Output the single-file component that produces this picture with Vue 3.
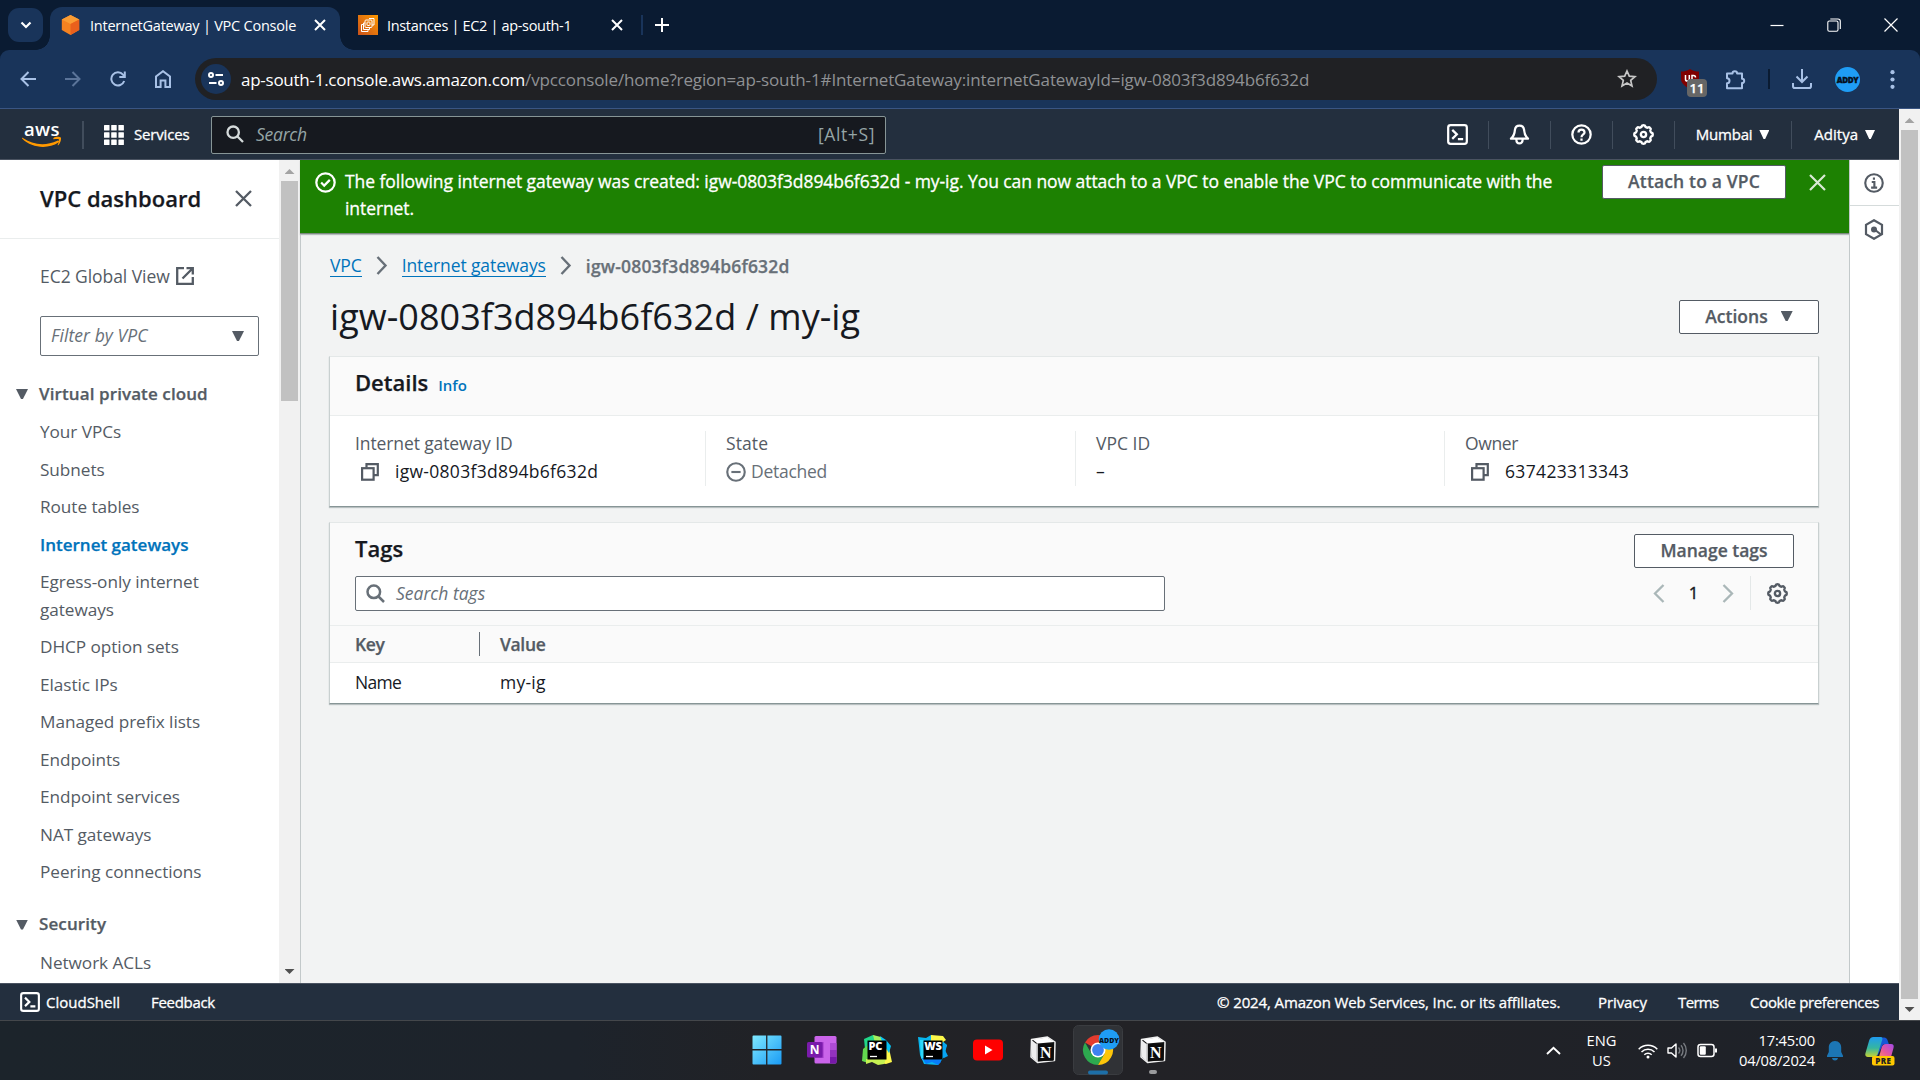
<script setup>
const vpcLinks = [
  'Your VPCs', 'Subnets', 'Route tables', 'Internet gateways', 'Egress-only internet gateways',
  'DHCP option sets', 'Elastic IPs', 'Managed prefix lists', 'Endpoints', 'Endpoint services',
  'NAT gateways', 'Peering connections'
]
const securityLinks = ['Network ACLs']
const current = 'Internet gateways'
const igw = 'igw-0803f3d894b6f632d'

// Outline of an eight-toothed cog on a 16-unit grid
const cog = 'M' + Array.from({ length: 96 }, (_, i) => {
  const a = (i / 96) * Math.PI * 2
  const r = 6.45 + 0.6 * Math.tanh(2.2 * Math.cos(8 * a))
  return (8 + r * Math.cos(a)).toFixed(2) + ' ' + (8 + r * Math.sin(a)).toFixed(2)
}).join('L') + 'Z'
</script>

<template>
  <div class="screen">
    <!-- Browser tab strip -->
    <div class="tabs">
      <div class="tab-search">
        <svg width="12" height="8" viewBox="0 0 12 8"><path d="M1.500 1.500 6 6l4.500-4.500" fill="none" stroke="#fff" stroke-width="2.200" /></svg>
      </div>
      <div class="tab active">
        <svg class="fav" width="19" height="20" viewBox="0 0 19 20">
          <path d="M9.500 0 18.200 4.600V15L9.500 20 .8 15V4.600Z" fill="#f58220" />
          <path d="M9.500 0 18.200 4.600 9.500 9 .8 4.600Z" fill="#fa9c33" />
          <path d="M9.500 9 18.200 4.600V15L9.500 20Z" fill="#e9601c" />
        </svg>
        <span class="tab-title">InternetGateway | VPC Console</span>
        <svg class="x" width="12" height="12" viewBox="0 0 12 12"><path d="M1 1l10 10M11 1 1 11" stroke="#fff" stroke-width="2" /></svg>
      </div>
      <div class="tab second">
        <svg class="fav" width="20" height="20" viewBox="0 0 20 20">
          <defs><linearGradient id="ec2" x1="0" y1="1" x2="1" y2="0"><stop offset="0" stop-color="#c8511b" /><stop offset="1" stop-color="#f90" /></linearGradient></defs>
          <rect width="20" height="20" fill="url(#ec2)" />
          <g fill="none" stroke="#fff" stroke-width="1"><rect x="7" y="5" width="7" height="7.500" rx="1" /><rect x="9" y="7" width="3" height="3.500" rx=".8" /><path d="M11 3.500h5V10h-2M5.500 9.500H3.500v7H10V14.500M7 8H5.500v6.500h6V12.500" /></g>
        </svg>
        <span class="tab-title">Instances | EC2 | ap-south-1</span>
        <svg class="x" width="12" height="12" viewBox="0 0 12 12"><path d="M1 1l10 10M11 1 1 11" stroke="#fff" stroke-width="2" /></svg>
      </div>
      <i class="tab-sep"></i>
      <svg class="plus" width="14" height="14" viewBox="0 0 14 14"><path d="M7 0v14M0 7h14" stroke="#fff" stroke-width="2" /></svg>
      <div class="win">
        <svg width="14" height="14" viewBox="0 0 14 14"><path d="M.5 7.500h13" stroke="#fff" stroke-width="1.200" /></svg>
        <svg width="14" height="14" viewBox="0 0 14 14" fill="none" stroke="#fff" stroke-width="1.100"><rect x=".8" y="3" width="10.200" height="10.200" rx="1.500" /><path d="M3.300 1H11a2.300 2.300 0 0 1 2.300 2.300V11" /></svg>
        <svg width="14" height="14" viewBox="0 0 14 14"><path d="M.5.5l13 13M13.500.5l-13 13" stroke="#fff" stroke-width="1.200" /></svg>
      </div>
    </div>

    <!-- Address bar -->
    <div class="toolbar-wrap">
      <div class="toolbar">
        <div class="nav-icons">
          <svg width="16" height="16" viewBox="0 0 16 16"><path d="M16 8H2M8.500 1 1.500 8l7 7" fill="none" stroke="#a8c1e6" stroke-width="2" /></svg>
          <svg width="16" height="16" viewBox="0 0 16 16"><path d="M0 8h14M7.500 1l7 7-7 7" fill="none" stroke="#5b7499" stroke-width="2" /></svg>
          <svg width="16" height="16" viewBox="0 0 16 16"><path d="M14.200 10A6.600 6.600 0 1 1 13 3.600L14.600 5.500" fill="none" stroke="#a8c1e6" stroke-width="2" /><path d="M15.800.5V7H9.300V5h4.500V.5Z" fill="#a8c1e6" /></svg>
          <svg width="16" height="18" viewBox="0 0 16 18"><path d="M1 17V6.500L8 1.200l7 5.300V17h-4.600v-6.500H5.600V17Z" fill="none" stroke="#a8c1e6" stroke-width="2" /></svg>
        </div>
        <div class="omnibox">
          <div class="site">
            <svg width="16" height="14" viewBox="0 0 16 14" fill="none" stroke="#fff" stroke-width="2"><circle cx="3" cy="3" r="2" /><path d="M7.500 3H15M1 11h7.500" /><circle cx="13" cy="11" r="2" /></svg>
          </div>
          <span class="host">ap-south-1.console.aws.amazon.com</span><span class="path">/vpcconsole/home?region=ap-south-1#InternetGateway:internetGatewayId=igw-0803f3d894b6f632d</span>
          <svg class="star" width="20" height="20" viewBox="0 0 20 20"><path d="M10 2l2.300 5.200 5.700.5-4.300 3.700 1.300 5.600-5-3-5 3 1.300-5.600L2 7.700l5.700-.5Z" fill="none" stroke="#c7c7c7" stroke-width="1.700" /></svg>
        </div>
        <div class="ublock">
          <svg width="20" height="20" viewBox="0 0 20 20"><path d="M10 0c3 2 6 2.500 9 2.500V10c0 4-4 7.500-9 10C5 17.500 1 14 1 10V2.500C4 2.500 7 2 10 0Z" fill="#800000" /><path d="M5.500 6v4.200a1.900 1.900 0 0 0 3.800 0V6M12 12V6.500h1.500a2 2 0 0 1 2 2" fill="none" stroke="#fff" stroke-width="1.500" /></svg>
          <b class="badge">11</b>
        </div>
        <svg class="puzzle" width="21" height="21" viewBox="0 0 21 21"><path d="M2 4.500h5.500a2.300 2.300 0 0 1 4.600 0H17v5.200a2.200 2.200 0 0 1 0 4.400V19.300H2v-5a2.500 2.500 0 0 0 0-5Z" fill="none" stroke="#a8c1e6" stroke-width="2" stroke-linejoin="round" /></svg>
        <i class="tool-sep"></i>
        <svg class="dl" width="20" height="20" viewBox="0 0 20 20"><path d="M10 0v13M4.500 7.500 10 13l5.500-5.500M1 14v3.200Q1 19 2.800 19h14.400q1.800 0 1.800-1.800V14" fill="none" stroke="#a8c1e6" stroke-width="2" /></svg>
        <div class="avatar">ADDY</div>
        <svg class="dots" width="5" height="19" viewBox="0 0 5 19" fill="#a8c1e6"><circle cx="2.500" cy="2.200" r="2.100" /><circle cx="2.500" cy="9.500" r="2.100" /><circle cx="2.500" cy="16.800" r="2.100" /></svg>
      </div>
    </div>

    <!-- Web page -->
    <div class="page">
      <div class="console">
        <header class="aws">
          <div class="logo">
            <span>aws</span>
            <svg width="40" height="11" viewBox="0 15 40 11">
              <path d="M.5 16.800C11 24.300 24 25 35.300 19.800c1.500-.7 2.500.7 1.100 1.700C26 28.500 9.500 27 .3 17.800c-.6-.7-.3-1.400.2-1Z" fill="#f90" />
              <path d="M31.500 17c2.500-1.700 6.500-1.200 7.300-.5.700.8-.2 5.700-2.500 7.700-.4.300-.8.100-.6-.4.700-1.500 1.700-4.600 1.200-5.300-.6-.7-3.500-.4-5-.2-.6 0-.8-.7-.4-1.300Z" fill="#f90" />
            </svg>
          </div>
          <i class="sep s-logo"></i>
          <svg class="grid-icon" width="20" height="20" viewBox="0 0 20 20" fill="#fff"><template v-for="r in 3"><rect v-for="c in 3" :key="r + '-' + c" :x="(c - 1) * 7.2" :y="(r - 1) * 7.2" width="5.500" height="5.500" rx=".5" /></template></svg>
          <span class="med services">Services</span>
          <div class="aws-search">
            <svg width="18" height="18" viewBox="0 0 18 18" fill="none" stroke="#d5dbdb" stroke-width="2.300"><circle cx="7.200" cy="7.200" r="5.700" /><path d="m11.500 11.500 5.500 5.500" /></svg>
            <em>Search</em><span class="alt">[Alt+S]</span>
          </div>
          <div class="aws-right">
            <svg width="21" height="21" viewBox="0 0 16 16" fill="none" stroke="#fff" stroke-width="1.700"><rect x=".9" y=".9" width="14.200" height="14.200" rx="1.800" /><path d="m4 4.500 3.500 3.400L4 11.300M8.300 11.500h4" /></svg>
            <i class="sep"></i>
            <svg width="21" height="21" viewBox="0 0 16 16" fill="none" stroke="#fff" stroke-width="1.700" stroke-linejoin="round"><path d="M8 1.200c-2 0-3.300 1.500-3.500 3.300-.2 3-1 5-3 6.700h13c-2-1.700-2.800-3.700-3-6.700C11.300 2.700 10 1.200 8 1.200ZM5.600 11.800c0 4 4.800 4 4.800 0" /></svg>
            <i class="sep"></i>
            <svg width="21" height="21" viewBox="0 0 16 16" fill="none" stroke="#fff" stroke-width="1.700"><circle cx="8" cy="8" r="7" /><path d="M5.700 6.500c0-3 4.600-3 4.600 0C10.300 8 8 8 8 10M8 11v1.700" /></svg>
            <i class="sep"></i>
            <svg width="21" height="21" viewBox="0 0 16 16" fill="none" stroke="#fff" stroke-width="1.800"><path :d="cog" /><circle cx="8" cy="8" r="2" /></svg>
            <i class="sep"></i>
            <span class="med region">Mumbai</span><i class="caret white"></i>
            <i class="sep wide"></i>
            <span class="med user">Aditya</span><i class="caret white"></i>
          </div>
        </header>

        <div class="body">
          <aside class="side">
            <div class="side-head">
              <h2>VPC dashboard</h2>
              <svg width="17" height="17" viewBox="0 0 17 17"><path d="m1 1 15 15M16 1 1 16" stroke="#545b64" stroke-width="2.300" /></svg>
            </div>
            <div class="side-body">
              <div class="global"><span>EC2 Global View</span>
                <svg width="18" height="18" viewBox="0 0 18 18" fill="none" stroke="#545b64" stroke-width="2.300"><path d="M8 1.200H1.200v15.600h15.600V10M10.500 1.200h6.300v6.300M16.500 1.500 6.500 11.500" /></svg>
              </div>
              <div class="filter"><em>Filter by VPC</em><i class="caret"></i></div>
              <div class="section"><i class="caret"></i><b>Virtual private cloud</b></div>
              <ul><li v-for="l in vpcLinks" :key="l" :class="{ on: l === current }">{{ l }}</li></ul>
              <div class="section second-section"><i class="caret"></i><b>Security</b></div>
              <ul><li v-for="l in securityLinks" :key="l">{{ l }}</li></ul>
            </div>
          </aside>
          <div class="scroll inner"><i class="up"></i><i class="thumb"></i><i class="down"></i></div>

          <main>
            <div class="flash">
              <svg width="21" height="21" viewBox="0 0 16 16" fill="none" stroke="#fff" stroke-width="1.700"><circle cx="8" cy="8" r="7" /><path d="m4.700 8 2.300 2.400L11.300 6" /></svg>
              <p class="med"><span>The following internet gateway was created: igw-0803f3d894b6f632d - my-ig. You can now attach to a VPC to enable the VPC to communicate with the</span> internet.</p>
              <button class="btn attach">Attach to a VPC</button>
              <svg class="fx" width="17" height="17" viewBox="0 0 17 17"><path d="m1 1 15 15M16 1 1 16" stroke="#d9ead5" stroke-width="2.200" /></svg>
            </div>
            <div class="content">
              <nav class="crumbs">
                <a>VPC</a>
                <svg width="12" height="19" viewBox="0 0 12 19"><path d="m1.500 1 8 8.500-8 8.500" fill="none" stroke="#687078" stroke-width="2.400" /></svg>
                <a>Internet gateways</a>
                <svg width="12" height="19" viewBox="0 0 12 19"><path d="m1.500 1 8 8.500-8 8.500" fill="none" stroke="#687078" stroke-width="2.400" /></svg>
                <b>{{ igw }}</b>
              </nav>
              <div class="title-row">
                <h1>{{ igw }} / my-ig</h1>
                <button class="btn actions">Actions<i class="caret"></i></button>
              </div>

              <section class="card details">
                <div class="card-head"><h3>Details</h3><b class="info">Info</b></div>
                <div class="cols">
                  <div class="col">
                    <label class="c1">Internet gateway ID</label>
                    <div class="val copy"><svg width="18" height="18" viewBox="0 0 18 18" fill="none" stroke="#545b64" stroke-width="2.200"><rect x="1.100" y="5.200" width="11.500" height="11.500" /><path d="M5.500 4.500V1.200h11.300v11H13" /></svg><span class="id">{{ igw }}</span></div>
                  </div>
                  <div class="col">
                    <label class="c2">State</label>
                    <div class="val muted"><svg width="20" height="20" viewBox="0 0 16 16" fill="none" stroke="#687078" stroke-width="1.700"><circle cx="8" cy="8" r="7" /><path d="M4.300 8h7.400" /></svg><span>Detached</span></div>
                  </div>
                  <div class="col">
                    <label class="c3">VPC ID</label>
                    <div class="val">–</div>
                  </div>
                  <div class="col">
                    <label class="c4">Owner</label>
                    <div class="val copy"><svg width="18" height="18" viewBox="0 0 18 18" fill="none" stroke="#545b64" stroke-width="2.200"><rect x="1.100" y="5.200" width="11.500" height="11.500" /><path d="M5.500 4.500V1.200h11.300v11H13" /></svg><span class="acct">637423313343</span></div>
                  </div>
                </div>
              </section>

              <section class="card tags">
                <div class="tags-top">
                  <div class="tags-left">
                    <h3>Tags</h3>
                    <div class="tag-search">
                      <svg width="19" height="19" viewBox="0 0 19 19" fill="none" stroke="#687078" stroke-width="2.500"><circle cx="7.800" cy="7.800" r="6.300" /><path d="m12.500 12.500 5.500 5.500" /></svg>
                      <em>Search tags</em>
                    </div>
                  </div>
                  <div class="tags-right">
                    <button class="btn manage">Manage tags</button>
                    <div class="pager">
                      <svg width="12" height="19" viewBox="0 0 12 19"><path d="m10.500 1-8.500 8.500 8.500 8.500" fill="none" stroke="#aab7b8" stroke-width="2.300" /></svg>
                      <span>1</span>
                      <svg width="12" height="19" viewBox="0 0 12 19"><path d="m1.500 1 8.500 8.500-8.500 8.500" fill="none" stroke="#aab7b8" stroke-width="2.300" /></svg>
                      <i></i>
                      <svg width="21" height="21" viewBox="0 0 16 16" fill="none" stroke="#545b64" stroke-width="1.800"><path :d="cog" /><circle cx="8" cy="8" r="2" /></svg>
                    </div>
                  </div>
                </div>
                <div class="row th"><b>Key</b><b>Value</b></div>
                <div class="row"><span class="name">Name</span><span class="my">my-ig</span></div>
              </section>
            </div>
          </main>

          <div class="rail">
            <div><svg width="20" height="20" viewBox="0 0 16 16" fill="none" stroke="#545b64" stroke-width="1.700"><circle cx="8" cy="8" r="7" /><path d="M6.200 7.200H8.300v4.300M5.700 11.700h4.800M7.100 4.500h1.700" /></svg></div>
            <div><svg width="20" height="21" viewBox="0 0 20 21" fill="none" stroke="#545b64" stroke-width="2.200"><path d="M10 1.200 18 5.800v9.400l-8 4.600-8-4.600V5.800Z" /><circle cx="10" cy="10.500" r="3" fill="#545b64" stroke="none" /><path d="m10.500 10.500 6.500 5" /></svg></div>
          </div>
        </div>

        <footer class="foot med">
          <svg width="20" height="20" viewBox="0 0 16 16" fill="none" stroke="#fff" stroke-width="1.700"><rect x=".9" y=".9" width="14.200" height="14.200" rx="1.800" /><path d="m4 4.500 3.500 3.400L4 11.300M8.300 11.500h4" /></svg>
          <span class="f1">CloudShell</span><span class="f2">Feedback</span>
          <span class="f3">© 2024, Amazon Web Services, Inc. or its affiliates.</span>
          <span class="f4">Privacy</span><span class="f5">Terms</span><span class="f6">Cookie preferences</span>
        </footer>
      </div>
      <div class="scroll outer"><i class="up"></i><i class="thumb"></i><i class="down"></i></div>
    </div>

    <!-- Windows taskbar -->
    <div class="taskbar">
      <div class="apps">
        <svg width="30" height="30" viewBox="0 0 30 30">
          <defs><linearGradient id="win" x1="0" y1="0" x2="1" y2="1"><stop offset="0" stop-color="#7fe9ff" /><stop offset="1" stop-color="#1a9bf5" /></linearGradient></defs>
          <path d="M1.500.5h12.600v13.600H.5V1.500a1 1 0 0 1 1-1ZM15.400.5h13.100a1 1 0 0 1 1 1v12.600H15.400ZM.5 15.400h13.600v14.100H1.500a1 1 0 0 1-1-1ZM15.400 15.400h14.100v13.100a1 1 0 0 1-1 1H15.400Z" fill="url(#win)" />
        </svg>
        <svg width="30" height="30" viewBox="0 0 30 30">
          <rect x="7.500" y="1" width="22" height="27.500" rx="1.500" fill="#ca64ea" /><path d="M23 8h6.500v7H23Z" fill="#ae4bd5" /><path d="M23 15h6.500v7H23Z" fill="#9332bf" /><path d="M23 22h6.500v5a1.500 1.500 0 0 1-1.500 1.500h-5Z" fill="#7719aa" /><path d="M16.500 7h-9v16h9Z" fill="#a038c8" />
          <rect x="0" y="7" width="15.500" height="15.500" rx="1.500" fill="#7a1bab" /><text x="7.700" y="19.300" class="ico-n">N</text>
        </svg>
        <svg width="30" height="30" viewBox="0 0 30 30">
          <path d="M2 4 11 0l4 2-1 6-8 18-4-1-1-6 2-5Z" fill="#21d789" /><path d="M11 0l8 2 3 4-9 2Z" fill="#a5ef5d" /><path d="M1 14l5-4v18l-6-2Z" fill="#62d84e" /><path d="M23 9l3 0 4 18-6 2-6-1Z" fill="#fcf84a" /><path d="M4 24h20l-2 5-6 1-6-3-6 2Z" fill="#c6f152" /><path d="M18 1l6 4 5 6-2 7-6-9Z" fill="#07c3f2" />
          <rect x="5.500" y="5.500" width="19" height="19" /><text x="6.600" y="15.300" class="ico-j">PC</text><path d="M8 21.500h7" stroke="#fff" stroke-width="1.300" />
        </svg>
        <svg width="30" height="30" viewBox="0 0 30 30">
          <path d="M0 2l8 1 5-3 8 3 8 7-3 12-6 8-14-1-4-9Z" fill="#08b5ee" /><path d="M13 0l12 1 3 4-6 4-9-3Z" fill="#fcf84a" /><path d="M2 5l4 0v21l-3-3Z" fill="#2bd8fb" /><path d="M4 23l18-1 1 5-3 3-6-3-6 2Z" fill="#087cfa" /><path d="M23 8l6 2-2 5 3 6-4 2-3-2Z" fill="#07a5f2" />
          <rect x="5.500" y="5.500" width="19" height="19" /><text x="6.300" y="15.300" class="ico-j">WS</text><path d="M8 21.500h7" stroke="#fff" stroke-width="1.300" />
        </svg>
        <svg width="30" height="30" viewBox="0 0 30 30"><rect y="4.500" width="30" height="21" rx="4" fill="#f00" /><path d="m12 10.500 7.500 4.500L12 19.500Z" fill="#fff" /></svg>
        <svg width="30" height="30" viewBox="0 0 30 30"><path d="m3.500 4.500 16-2.500 7.500 5-.5 18.500-17 2L3 22Z" fill="#111" stroke="#eee" stroke-width="1.500" stroke-linejoin="round" /><path d="m4.500 4.500 5 4 17-1.500-7-4.500Z" fill="#fff" /><path d="M9 8.500v18.500" stroke="#eee" stroke-width="1.500" /><path d="m3.500 5 5 4v17.500l-5-5Z" fill="#eee" /><rect x="10" y="9.300" width="15.500" height="16.500" fill="#0c0c0c" /><text x="17.800" y="23" class="ico-s">N</text></svg>
        <div class="chrome">
          <svg width="50" height="50" viewBox="0 0 50 50">
            <rect x=".5" y=".5" width="49" height="49" rx="5" fill="#303236" stroke="#3a3c40" />
            <g transform="translate(25 25)">
              <path d="M0 0-13-7.500A15 15 0 0 1 13-7.500Z" fill="#e33b2e" /><path d="M-13-7.500A15 15 0 0 0 0 15L6.500 3.700-6.500 3.700Z" fill="#2da94f" /><path d="M13-7.500A15 15 0 0 1 0 15L6.500 3.700 0-7.500Z" fill="#fdc60a" />
              <circle r="7.500" fill="#fff" /><circle r="5.900" fill="#3e82f1" />
            </g>
            <circle cx="36" cy="14.500" r="10.300" fill="#1f9df5" /><text x="36" y="17.600" class="ico-addy">ADDY</text>
            <rect x="15" y="45.500" width="20" height="4" rx="2" fill="#1d6fa8" />
          </svg>
        </div>
        <div class="running">
          <svg width="30" height="30" viewBox="0 0 30 30"><path d="m3.500 4.500 16-2.500 7.500 5-.5 18.500-17 2L3 22Z" fill="#111" stroke="#eee" stroke-width="1.500" stroke-linejoin="round" /><path d="m4.500 4.500 5 4 17-1.500-7-4.500Z" fill="#fff" /><path d="M9 8.500v18.500" stroke="#eee" stroke-width="1.500" /><path d="m3.500 5 5 4v17.500l-5-5Z" fill="#eee" /><rect x="10" y="9.300" width="15.500" height="16.500" fill="#0c0c0c" /><text x="17.800" y="23" class="ico-s">N</text></svg>
          <i></i>
        </div>
      </div>
      <div class="tray">
        <svg width="15" height="9" viewBox="0 0 15 9"><path d="m1 8 6.500-6.300L14 8" fill="none" stroke="#fff" stroke-width="1.900" /></svg>
        <div class="lang"><span>ENG</span><span>US</span></div>
        <svg class="wifi" width="20" height="16" viewBox="0 0 20 16" fill="none" stroke="#fff" stroke-width="1.500"><path d="M.7 6.200a13.200 13.200 0 0 1 18.600 0M3.500 9a9.200 9.200 0 0 1 13 0M6.300 11.800a5.300 5.300 0 0 1 7.400 0" /><circle cx="10" cy="14" r="1.500" fill="#fff" stroke="none" /></svg>
        <svg class="vol" width="21" height="17" viewBox="0 0 21 17" fill="none" stroke-width="1.400"><path d="M1 6v5h3.500L9 15V2L4.500 6Z" stroke="#fff" stroke-linejoin="round" /><path d="M11.500 5.500a4.500 4.500 0 0 1 0 6M14 3.200a8 8 0 0 1 0 10.600M16.500 1a11.500 11.500 0 0 1 0 15" stroke="#777b80" /></svg>
        <svg class="bat" width="21" height="15" viewBox="0 0 21 15" fill="none" stroke="#fff" stroke-width="1.500"><rect x="1" y="1.500" width="16" height="12" rx="2.500" /><rect x="2.800" y="3.300" width="6" height="8.400" rx="1" fill="#fff" stroke="none" /><path d="M19 5.500v4" stroke-width="2" /></svg>
        <div class="clock"><span>17:45:00</span><span class="date">04/08/2024</span></div>
        <svg class="bell" width="16" height="20" viewBox="0 0 16 20" fill="#1c76b5"><path d="M8 0C4 0 1.800 3 1.800 6.500V11L0 14.800c-.3.700 0 1.200.7 1.200h14.600c.7 0 1-.5.7-1.200L14.200 11V6.500C14.200 3 12 0 8 0ZM5 17h6c-.3 1.700-1.500 2.500-3 2.500S5.300 18.700 5 17Z" /></svg>
        <svg class="copilot" width="30" height="30" viewBox="0 0 30 30">
          <defs>
            <linearGradient id="cpa" x1="0" y1="0" x2="0" y2="1"><stop offset="0" stop-color="#1f9bf0" /><stop offset=".55" stop-color="#35b6a0" /><stop offset="1" stop-color="#c8d432" /></linearGradient>
            <linearGradient id="cpb" x1="1" y1="0" x2="0" y2="1"><stop offset="0" stop-color="#a24bea" /><stop offset=".6" stop-color="#e8579b" /><stop offset="1" stop-color="#f8876b" /></linearGradient>
          </defs>
          <path d="M13 1.500h6q3 0 4 4l1 3h-6l-6 12-1-10Z" fill="#1757d6" />
          <path d="M8.500 1H16q2 0 1.200 3L13 17q-1 4-4.500 4H3q-3.500 0-2.500-4L4 5q1-4 4.500-4Z" fill="url(#cpa)" />
          <path d="M21 8h5q3.500 0 2.500 4L26 21H14l2.500-9q1-4 4.500-4Z" fill="url(#cpb)" />
          <rect x="7" y="20" width="22.500" height="9.500" rx="2" fill="#ffc800" /><text x="18.300" y="27.700" class="ico-pre">PRE</text>
        </svg>
      </div>
    </div>
  </div>
</template>

<style>
body { margin: 0; overflow: hidden; }
</style>

<style scoped>
* { box-sizing: border-box; }
.screen { width: 1920px; height: 1080px; display: flex; flex-direction: column; font-family: "Open Sans", "Noto Sans", sans-serif; font-size: 17.5px; color: #16191f; overflow: hidden; white-space: nowrap; }
svg { display: block; flex: none; }
h1, h2, h3, p, ul { margin: 0; padding: 0; }
b, h2, h3 { font-weight: 600; -webkit-text-stroke: .25px currentColor; }
i { flex: none; }
.med { -webkit-text-stroke: .3px currentColor; }
.caret { display: block; width: 12px; height: 10px; background: #545b64; clip-path: polygon(0 0, 100% 0, 58% 100%, 42% 100%); }
.caret.white { width: 10px; height: 9px; background: #fff; }

/* tab strip */
.tabs { height: 50px; flex: none; display: flex; align-items: center; background: #0a1b32; padding-left: 8px; }
.tab-search { width: 35px; height: 34px; border-radius: 11px; background: #19345a; display: flex; align-items: center; justify-content: center; }
.tab { display: flex; align-items: center; color: #fff; }
.tab-title { font-size: 14.5px; letter-spacing: -.23px; line-height: 20px; padding-top: 2px; }
.tab.active { align-self: flex-end; width: 290px; height: 43px; margin-left: 7px; padding: 0 14px 7px 11px; background: #19345a; border-radius: 12px 12px 0 0; position: relative; }
.tab.active::before, .tab.active::after { content: ""; position: absolute; bottom: 0; width: 14px; height: 14px; }
.tab.active::before { left: -14px; background: radial-gradient(circle at 0 0, transparent 13.5px, #19345a 14px); }
.tab.active::after { right: -14px; background: radial-gradient(circle at 100% 0, transparent 13.5px, #19345a 14px); }
.tab .fav { margin-right: 10px; }
.tab .x { margin-left: auto; }
.tab.second { width: 283px; margin-left: 18px; padding-right: 18px; }
.tab.second .fav { margin-right: 9px; }
.tab.second .tab-title { letter-spacing: -.33px; }
.tab-sep { width: 2px; height: 20px; background: #19345a; }
.plus { margin-left: 12px; }
.win { display: flex; gap: 43px; margin-left: auto; padding-right: 22px; }

/* toolbar */
.toolbar-wrap { height: 59px; flex: none; background: #0a1b32; }
.toolbar { height: 59px; background: #19345a; border-radius: 9px 9px 0 0; border-bottom: 1px solid #3a5583; display: flex; align-items: center; }
.nav-icons { display: flex; align-items: center; gap: 29px; margin-left: 20px; }
.omnibox { width: 1462px; height: 42px; margin-left: 24px; border-radius: 21px; background: #202124; display: flex; align-items: center; padding: 0 20px 0 6px; font-size: 17px; }
.site { width: 30px; height: 30px; border-radius: 50%; background: #19345a; display: flex; align-items: center; justify-content: center; margin-right: 10px; }
.host { color: #fff; letter-spacing: -.26px; }
.path { color: #8f9194; letter-spacing: -.13px; }
.star { margin-left: auto; }
.ublock { position: relative; margin-left: 23px; }
.badge { position: absolute; left: 7px; top: 10px; width: 20px; height: 18px; border-radius: 4px; background: #666; color: #fff; font-size: 13px; line-height: 18px; text-align: center; }
.puzzle { margin-left: 25px; }
.tool-sep { width: 2px; height: 20px; margin-left: 22px; background: #0a1b32; }
.dl { margin-left: 22px; }
.avatar { width: 25px; height: 25px; margin-left: 23px; border-radius: 50%; background: #1f9df5; color: #06101c; font: 800 8px/25px "Open Sans", sans-serif; text-align: center; letter-spacing: -.4px; -webkit-text-stroke: .4px #06101c; }
.dots { margin-left: 30px; }

/* page */
.page { flex: 1; min-height: 0; display: flex; }
.console { width: 1899px; display: flex; flex-direction: column; }
.aws { height: 51px; flex: none; background: #232f3e; border-bottom: 1px solid #4a5361; display: flex; align-items: center; color: #fff; font-size: 15px; padding-left: 22px; padding-top: 1px; }
.logo { width: 40px; height: 32px; display: flex; flex-direction: column; justify-content: flex-end; align-items: center; padding-bottom: 4px; }
.logo span { font: 600 18.5px/24px "Open Sans", sans-serif; letter-spacing: .4px; margin-bottom: -5px; }
.sep { width: 1px; height: 28px; background: #414d5c; }
.s-logo { width: 2px; margin-left: 20px; }
.grid-icon { margin-left: 20px; }
.services, .region, .user { padding-bottom: 2px; }
.services { margin-left: 10px; letter-spacing: -.17px; width: 77px; }
.aws-search { width: 675px; height: 38px; border: 1px solid #879596; border-radius: 2px; background: #16191f; display: flex; align-items: center; padding: 0 10px 2px 14px; color: #95a5a6; font-size: 17.5px; }
.aws-search svg { margin-top: 1px; }
.aws-search em { margin-left: 12px; letter-spacing: -.25px; }
.alt { margin-left: auto; letter-spacing: .6px; }
.aws-right { display: flex; align-items: center; margin-left: auto; padding-right: 24px; gap: 20px; }
.region { margin-left: 1px; letter-spacing: -.22px; }
.aws-right .caret { margin-left: -13px; }
.sep.wide { margin-left: 2px; margin-right: 2px; }

.body { flex: 1; min-height: 0; display: flex; background: #fff; }
.side { width: 279px; flex: none; overflow: hidden; color: #545b64; }
.side-head { height: 79px; border-bottom: 1px solid #eaeded; display: flex; align-items: center; justify-content: space-between; padding: 0 27px 2px 40px; }
.side-head h2 { font-size: 22px; color: #16191f; }
.side-body { padding: 23px 20px 0 40px; }
.global { display: flex; align-items: center; gap: 6px; height: 28px; letter-spacing: -.06px; }
.filter { width: 219px; height: 40px; margin-top: 26px; border: 1px solid #687078; border-radius: 2px; display: flex; align-items: center; justify-content: space-between; padding: 0 14px 2px 10px; color: #687078; letter-spacing: .07px; }
.filter .caret { position: relative; top: 1px; }
.section { display: flex; align-items: center; margin: 24px 0 0 -24px; height: 28px; gap: 11px; font-size: 17px; letter-spacing: .1px; }
.section b { padding-bottom: 2px; }
.second-section { margin-top: 25px; }
.side ul { list-style: none; }
.side li { line-height: 27.5px; margin-top: 10px; font-size: 17.2px; letter-spacing: -.05px; white-space: normal; width: 190px; }
.side ul li.on { color: #0073bb; font-weight: 600; font-size: 17px; letter-spacing: 0; -webkit-text-stroke: .25px; }

.scroll { display: flex; flex-direction: column; align-items: center; background: #f1f1f1; flex: none; }
.scroll i { display: block; }
.scroll .up { width: 10px; height: 5px; background: #a3a3a3; clip-path: polygon(50% 0, 100% 100%, 0 100%); }
.scroll .down { width: 10px; height: 5px; background: #505050; clip-path: polygon(0 0, 100% 0, 50% 100%); }
.scroll .thumb { width: 17px; background: #c1c1c1; }
.inner { width: 21px; }
.inner .up { margin-top: 9px; }
.inner .thumb { height: 220px; margin-top: 7px; }
.inner .down { margin-top: auto; margin-bottom: 9px; }
.outer { width: 21px; }
.outer .up { margin-top: 9px; }
.outer .thumb { height: 869px; margin-top: 7px; }
.outer .down { margin-top: auto; margin-bottom: 8px; }

main { width: 1549px; flex: none; background: #f2f3f3; border-left: 1px solid #c3c9ca; display: flex; flex-direction: column; }
.flash { height: 74px; flex: none; background: #1d8102; color: #fff; display: flex; align-items: flex-start; padding: 5px 23px 0 15px; margin-left: -1px; border-bottom: 1px solid #7d8a80; box-shadow: 0 1px 1px #b5bcbd; }
.flash svg { margin-top: 7px; }
.flash p { width: 1258px; margin-left: 9px; margin-top: 3px; line-height: 27px; letter-spacing: -.08px; font-size: 17.5px; white-space: normal; }
.flash p span { white-space: nowrap; display: block; letter-spacing: -.061px; }
.flash .fx { margin-left: 23px; margin-top: 9px; }
.btn { display: flex; align-items: center; justify-content: center; background: #fff; color: #545b64; border: 1px solid #545b64; border-radius: 2px; font: 600 17.5px "Open Sans", sans-serif; -webkit-text-stroke: .25px; padding: 0 0 2px; }
.attach { width: 184px; height: 34px; letter-spacing: .15px; flex: none; }
.content { padding: 18px 30px 0 28px; }
.crumbs { display: flex; align-items: center; height: 27px; margin-left: 1px; }
.crumbs a { color: #0073bb; border-bottom: 1.5px solid #0073bb; line-height: 22px; letter-spacing: -.1px; }
.crumbs svg { margin: 0 14px; }
.crumbs b { color: #687078; letter-spacing: .18px; }
.title-row { display: flex; align-items: center; justify-content: space-between; margin-top: 16px; height: 44px; }
.title-row h1 { font-size: 36px; font-weight: 400; letter-spacing: .04px; padding: 0 0 2px 1px; }
.actions { width: 140px; height: 34px; gap: 13px; }
.card { width: 1490px; background: #fff; border: 1px solid #e4e8e8; border-right-color: #c9d0d0; border-left-color: #c9d0d0; border-bottom: 1px solid #879596; box-shadow: 0 1px 1px #b9c0c1; }
.details { height: 151px; margin-top: 17px; }
.card-head { height: 59px; background: #fafafa; border-bottom: 1px solid #eaeded; display: flex; align-items: center; padding: 0 0 8px 25px; }
.card h3 { font-size: 22px; line-height: 30px; }
.info { color: #0073bb; font-size: 15px; margin-left: 10px; margin-top: 6px; -webkit-text-stroke: 0; }
.cols { display: flex; padding-top: 15px; }
.col { width: 370px; height: 55px; padding-left: 20px; border-left: 1px solid #eaeded; }
.col:first-child { border: 0; width: 375px; padding-left: 25px; }
.col:nth-child(3) { width: 369px; }
.col label { display: block; color: #545b64; line-height: 28px; height: 28px; margin-top: -2px; }
.c1 { letter-spacing: -.11px; } .c2 { letter-spacing: .1px; } .c4 { letter-spacing: -.36px; }
.val { display: flex; align-items: center; height: 28px; }
.val svg { margin-top: 2px; }
.muted { color: #687078; gap: 5px; letter-spacing: -.27px; }
.copy { padding-left: 6px; gap: 16px; }
.id { letter-spacing: .29px; } .acct { letter-spacing: .34px; }
.tags { margin-top: 15px; height: 182px; }
.tags-top { height: 102px; background: #fafafa; display: flex; justify-content: space-between; padding: 0 24px 0 25px; }
.tags-left h3 { margin-top: 10px; }
.tag-search { margin-top: 13px; width: 810px; height: 35px; border: 1px solid #687078; border-radius: 2px; background: #fff; display: flex; align-items: center; padding-left: 10px; gap: 11px; color: #687078; padding-bottom: 1px; }
.tags-right { display: flex; flex-direction: column; align-items: flex-end; }
.manage { width: 160px; height: 34px; margin-top: 11px; }
.pager { display: flex; align-items: center; margin-top: 8px; height: 34px; padding-right: 6px; }
.pager span { width: 57px; text-align: center; -webkit-text-stroke: .4px; font-size: 17px; padding-bottom: 1px; }
.pager i { width: 1px; height: 34px; background: #e4e8e8; margin: 0 16px; }
.row { display: flex; align-items: center; height: 40px; padding: 0 0 2px 25px; }
.row > :first-child { width: 125px; }
.row > :last-child { padding-left: 20px; }
.th { height: 38px; padding-bottom: 1px; background: #fafafa; border-top: 1px solid #eaeded; border-bottom: 1px solid #eaeded; color: #545b64; letter-spacing: -.35px; }
.th > :first-child { border-right: 1px solid #687078; line-height: 24px; }
.name { letter-spacing: -.7px; } .my { letter-spacing: .24px; }

.rail { width: 50px; background: #fff; border-left: 1px solid #c3c9ca; }
.rail div { height: 46px; display: flex; align-items: center; justify-content: center; border-bottom: 1px solid #d5dbdb; padding-right: 2px; }
.rail div:last-child { border: 0; }

.foot { height: 37px; flex: none; background: #232f3e; border-top: 1px solid #4a5361; color: #fff; display: flex; align-items: center; font-size: 15px; padding: 0 20px; }
.f1 { margin-left: 6px; width: 105px; }
.f2 { letter-spacing: -.3px; }
.f3 { margin-left: auto; letter-spacing: -.13px; width: 381px; }
.f4 { letter-spacing: -.11px; width: 80px; } .f5 { letter-spacing: -.7px; width: 72px; } .f6 { letter-spacing: -.35px; }

/* taskbar */
.taskbar { height: 60px; flex: none; background: linear-gradient(90deg, #1c242b, #1d232b 30%, #212226 40%, #222226 60%, #1e2229); border-top: 1px solid #44474b; position: relative; color: #fff; display: flex; align-items: center; justify-content: flex-end; }
.apps { position: absolute; left: 752px; top: 4px; height: 50px; display: flex; align-items: center; gap: 25.2px; }
.chrome { margin: 0 -10px; }
.running { position: relative; }
.running i { position: absolute; left: 11px; top: 35px; width: 8px; height: 4px; border-radius: 2px; background: #9a9b9d; }
.ico-n { font: 700 12px "Open Sans", sans-serif; fill: #fff; text-anchor: middle; }
.ico-j { font: 800 11px "Open Sans", sans-serif; fill: #fff; letter-spacing: -.3px; }
.ico-s { font: 700 16px "Liberation Serif", serif; fill: #fff; text-anchor: middle; }
.ico-addy { font: 800 7px "Open Sans", sans-serif; fill: #06101c; text-anchor: middle; }
.ico-pre { font: 800 8px "Open Sans", sans-serif; fill: #222; text-anchor: middle; letter-spacing: .4px; }
.tray { display: flex; align-items: center; padding: 0 25px 0 0; font-size: 14.7px; line-height: 20px; }
.lang, .clock { display: flex; flex-direction: column; padding-bottom: 1px; }
.lang { align-items: center; width: 31px; margin: 0 21px 0 25px; }
.clock { align-items: flex-end; width: 86px; margin-right: 12px; letter-spacing: -.2px; }
.vol { margin-left: 9px; } .bat { margin-left: 9px; margin-right: 11px; }
.bell { margin-right: 22px; }
</style>
